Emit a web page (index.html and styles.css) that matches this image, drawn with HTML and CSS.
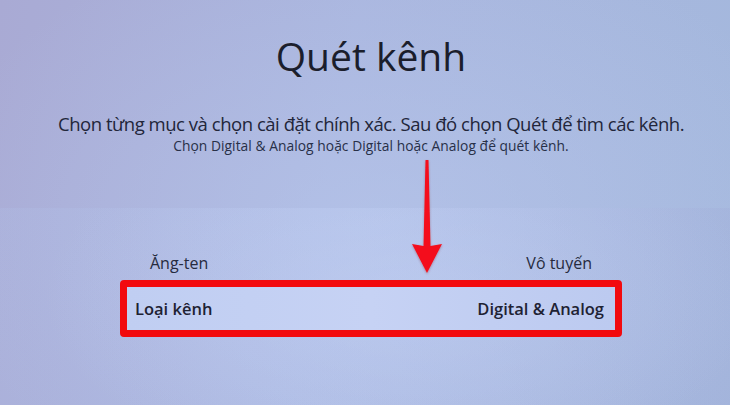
FILE: index.html
```html
<!DOCTYPE html>
<html lang="vi">
<head>
<meta charset="utf-8">
<link rel="stylesheet" href="styles.css">
</head>
<body>
<div class="screen">
  <section class="head">
    <h1 class="title">Quét kênh</h1>
    <p class="desc">Chọn từng mục và chọn cài đặt chính xác. Sau đó chọn Quét để tìm các kênh.</p>
    <p class="hint">Chọn Digital &amp; Analog hoặc Digital hoặc Analog để quét kênh.</p>
  </section>
  <section class="list">
    <div class="item">
      <span>Ăng-ten</span>
      <span>Vô tuyến</span>
    </div>
    <div class="item focused">
      <span>Loại kênh</span>
      <span>Digital &amp; Analog</span>
    </div>
  </section>
  <svg class="arrow" width="34" height="118" viewBox="0 0 34 118">
    <defs>
      <filter id="sh" x="-50%" y="-20%" width="200%" height="140%">
        <feDropShadow dx="0" dy="1" stdDeviation="1" flood-color="#803040" flood-opacity="0.45"/>
      </filter>
    </defs>
    <path d="M15.5 2 L18.5 2 L20.5 88 L32 86 L17 115 L2 86 L13.5 88 Z" fill="#f4101a" filter="url(#sh)"/>
  </svg>
</div>
</body>
</html>
```
FILE: styles.css
```css
* { box-sizing: border-box; }
html, body { margin: 0; padding: 0; }
body {
  width: 730px;
  height: 405px;
  overflow: hidden;
  font-family: "Open Sans", "Noto Sans", sans-serif;
  color: #1c2030;
}
.screen {
  position: relative;
  width: 730px;
  height: 405px;
  display: flex;
  flex-direction: column;
  padding-left: 12px;
  background:
    radial-gradient(ellipse 460px 300px at 52% 55%, rgba(188, 204, 240, 0.5), rgba(188, 204, 240, 0) 100%),
    linear-gradient(100deg, #a9aad4 0%, #a9b5de 45%, #a4b8dd 100%);
}
.head {
  height: 208px;
  display: flex;
  flex-direction: column;
  align-items: center;
  padding-top: 33px;
}
.title {
  margin: 0;
  font-size: 39px;
  font-weight: 400;
  line-height: 46px;
  letter-spacing: 0;
  color: #1b1e2c;
}
.desc {
  margin: 33px 0 0;
  font-size: 18.5px;
  font-weight: 400;
  line-height: 24px;
  color: #22263a;
  letter-spacing: -0.47px;
}
.hint {
  margin: 1px 0 0;
  font-size: 13.8px;
  line-height: 18px;
  color: #283048;
  letter-spacing: 0.05px;
}
.list {
  flex: 1;
  margin-left: -12px;
  padding-left: 12px;
  display: flex;
  flex-direction: column;
  align-items: center;
  padding-top: 45px;
  background:
    radial-gradient(ellipse 360px 180px at 55% 45%, rgba(200, 214, 248, 0.4), rgba(200, 214, 248, 0) 100%),
    linear-gradient(90deg, rgba(180, 200, 240, 0.18), rgba(190, 205, 245, 0.14) 50%, rgba(160, 168, 214, 0.25));
}
.item {
  width: 442px;
  display: flex;
  justify-content: space-between;
  align-items: center;
  font-size: 16px;
  line-height: 21px;
  color: #262b3e;
  letter-spacing: 0;
}
.item.focused {
  width: 502px;
  height: 57px;
  margin-top: 6px;
  padding: 0 11px 0 8px;
  border: 7px solid #f20a0e;
  border-radius: 4px;
  background: linear-gradient(90deg, #c0cef2, #c6d2f4 50%, #bccaf0);
  font-size: 16.5px;
  font-weight: 600;
  letter-spacing: 0;
  color: #1e2233;
}
.arrow {
  position: absolute;
  left: 410px;
  top: 158px;
}
```
